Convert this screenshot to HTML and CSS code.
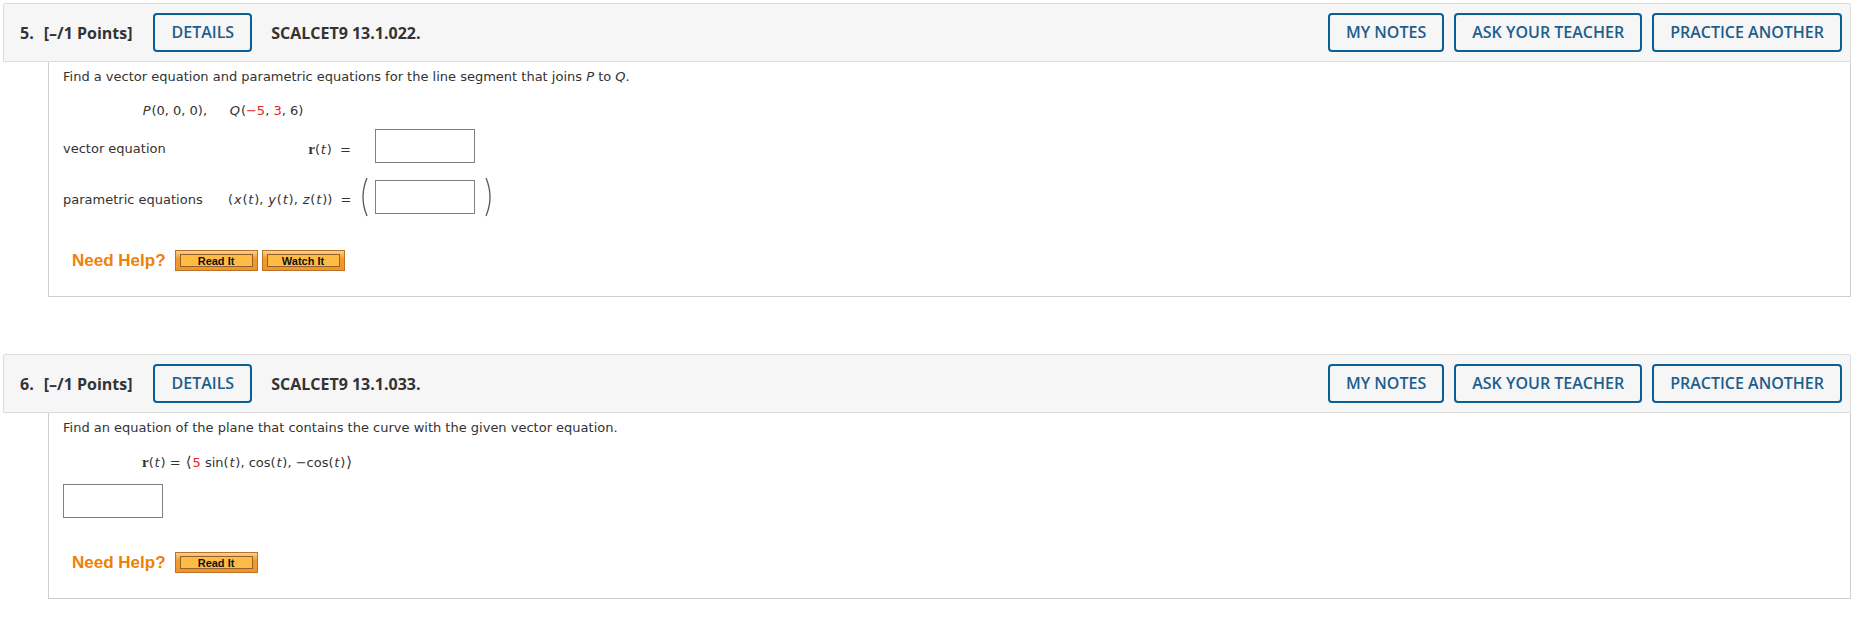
FILE: index.html
```html
<!DOCTYPE html>
<html>
<head>
<meta charset="utf-8">
<link rel="stylesheet" href="styles.css">
</head>
<body>
<div class="page">
  <section class="question">
    <div class="qhead">
      <span class="qnum">5.</span>
      <span class="qpoints">[–/1 Points]</span>
      <button class="btn">DETAILS</button>
      <span class="qcode">SCALCET9 13.1.022.</span>
      <div class="qactions">
        <button class="btn">MY NOTES</button>
        <button class="btn">ASK YOUR TEACHER</button>
        <button class="btn">PRACTICE ANOTHER</button>
      </div>
    </div>
    <div class="qbody">
      <p class="line">Find a vector equation and parametric equations for the line segment that joins <i>P</i> to <i>Q</i>.</p>
      <p class="line indent"><i class="mv">P</i>(0, 0, 0),<span class="gap"></span><i class="mv">Q</i>(<span class="red">−5</span>, <span class="red">3</span>, 6)</p>
      <div class="eqgrid">
        <span class="lbl">vector equation</span>
        <span class="expr"><b class="vr">r</b>(<i class="mv">t</i>) &nbsp;=</span>
        <span class="paren"></span>
        <span class="answer"></span>
        <span class="paren"></span>

        <span class="lbl">parametric equations</span>
        <span class="expr">(<i class="mv">x</i>(<i class="mv">t</i>), <i class="mv">y</i>(<i class="mv">t</i>), <i class="mv">z</i>(<i class="mv">t</i>)) &nbsp;=</span>
        <span class="paren"><svg width="12" height="40" viewBox="0 0 12 40"><path d="M9 1 Q1 20 9 39" fill="none" stroke="#555" stroke-width="1.3"/></svg></span>
        <span class="answer"></span>
        <span class="paren right"><svg width="12" height="40" viewBox="0 0 12 40"><path d="M3 1 Q11 20 3 39" fill="none" stroke="#555" stroke-width="1.3"/></svg></span>
      </div>
      <div class="help">
        <span class="needhelp">Need Help?</span>
        <span class="hbtn"><span class="hbtn-in">Read It</span></span>
        <span class="hbtn"><span class="hbtn-in">Watch It</span></span>
      </div>
    </div>
  </section>

  <section class="question second">
    <div class="qhead">
      <span class="qnum">6.</span>
      <span class="qpoints">[–/1 Points]</span>
      <button class="btn">DETAILS</button>
      <span class="qcode">SCALCET9 13.1.033.</span>
      <div class="qactions">
        <button class="btn">MY NOTES</button>
        <button class="btn">ASK YOUR TEACHER</button>
        <button class="btn">PRACTICE ANOTHER</button>
      </div>
    </div>
    <div class="qbody">
      <p class="line">Find an equation of the plane that contains the curve with the given vector equation.</p>
      <p class="line indent"><b class="vr">r</b>(<i class="mv">t</i>) = <span class="ang">⟨</span><span class="red">5</span> sin(<i class="mv">t</i>), cos(<i class="mv">t</i>), −cos(<i class="mv">t</i>)<span class="ang">⟩</span></p>
      <div class="answer single"></div>
      <div class="help help2">
        <span class="needhelp">Need Help?</span>
        <span class="hbtn"><span class="hbtn-in">Read It</span></span>
      </div>
    </div>
  </section>
</div>
</body>
</html>
```
FILE: styles.css
```css
html, body {
  margin: 0;
  padding: 0;
  background: #fff;
}
.page {
  padding: 3px 0 0 3px;
  width: 1848px;
}
.question.second {
  margin-top: 57px;
}
.qhead {
  box-sizing: border-box;
  height: 59px;
  display: flex;
  align-items: center;
  background: #f6f6f6;
  border: 1px solid #dcdcdc;
  border-radius: 2px 2px 0 0;
  padding: 0 8px 0 16px;
  font-family: "Open Sans", sans-serif;
  font-size: 16px;
  color: #333;
}
.qnum {
  font-weight: 700;
  margin-right: 10px;
}
.qpoints {
  font-weight: 700;
  margin-right: 21px;
}
.qcode {
  font-weight: 700;
  margin-left: 19px;
}
.qactions {
  margin-left: auto;
  display: flex;
  gap: 10px;
}
.btn {
  box-sizing: border-box;
  height: 39px;
  padding: 0 16px;
  background: #f6f6f6;
  border: 2px solid #0a5f97;
  border-radius: 4px;
  color: #1d5e8e;
  font-family: "Open Sans", sans-serif;
  font-weight: 600;
  font-size: 16px;
  line-height: 35px;
}
.qbody {
  margin-left: 45px;
  border: 1px solid #cfcfcf;
  border-top: none;
  padding: 7px 14px 25px 14px;
  font-family: "DejaVu Sans", Verdana, sans-serif;
  font-size: 13px;
  color: #333;
}
.line {
  margin: 0;
  line-height: 16px;
}
.line.indent {
  margin-top: 18px;
  padding-left: 79px;
}
.gap {
  display: inline-block;
  width: 22px;
}
.mv {
  padding: 0 0.8px;
}
.ang {
  font-size: 15px;
  line-height: 16px;
  padding: 0 1px;
}
.red {
  color: #e2231a;
}
.vr {
  font-family: "Liberation Serif", serif;
  font-weight: 700;
  font-size: 15px;
}
.eqgrid {
  margin-top: 10px;
  display: grid;
  grid-template-columns: 165px 127px 20px 100px 20px;
  grid-auto-rows: 34px;
  row-gap: 17px;
  align-items: center;
}
.lbl, .expr {
  line-height: 16px;
  padding-top: 6px;
  white-space: nowrap;
}
.expr {
  text-align: right;
  padding-right: 4px;
}
.paren {
  display: flex;
  align-items: center;
  height: 34px;
  padding-left: 3px;
}
.paren.right {
  padding-left: 8px;
}
.answer {
  box-sizing: border-box;
  display: block;
  width: 100px;
  height: 34px;
  border: 1px solid #808080;
  background: #fff;
}
.answer.single {
  margin-top: 13px;
}
.help {
  margin-top: 36px;
  padding-left: 9px;
  display: flex;
  align-items: center;
  height: 21px;
}
.help2 {
  margin-top: 34px;
}
.needhelp {
  font-family: "Liberation Sans", Arial, sans-serif;
  font-weight: 700;
  font-size: 17px;
  color: #ee8106;
  margin-right: 9px;
}
.hbtn {
  box-sizing: border-box;
  width: 83px;
  height: 21px;
  padding: 3px 4px;
  margin-right: 4px;
  background: linear-gradient(#ffd08a, #f39a2e 40%, #f29426);
  border: 1px solid #b8722a;
  display: flex;
}
.hbtn-in {
  flex: 1;
  box-sizing: border-box;
  border: 1px solid #8f6230;
  background: #ffbc45;
  font-family: "Liberation Sans", Arial, sans-serif;
  font-weight: 700;
  font-size: 11px;
  color: #111;
  text-align: center;
  line-height: 13px;
}
```
